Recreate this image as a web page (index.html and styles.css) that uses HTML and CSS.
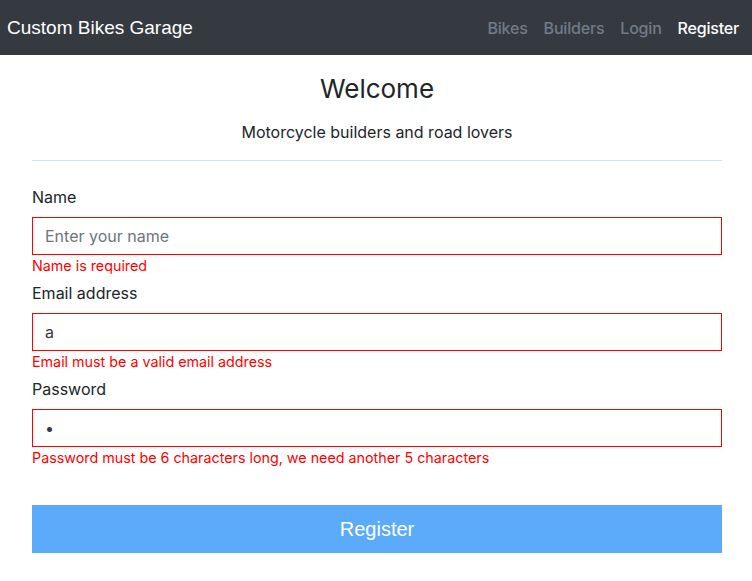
FILE: index.html
```html
<!DOCTYPE html>
<html lang="en">
<head>
<meta charset="utf-8">
<title>Custom Bikes Garage</title>
<link rel="stylesheet" href="styles.css">
</head>
<body>
<nav class="navbar">
  <a class="brand" href="#">Custom Bikes Garage</a>
  <ul class="nav">
    <li><a class="nav-link" href="#">Bikes</a></li>
    <li><a class="nav-link" href="#">Builders</a></li>
    <li><a class="nav-link" href="#">Login</a></li>
    <li><a class="nav-link active" href="#">Register</a></li>
  </ul>
</nav>
<main class="container">
  <h2 class="title">Welcome</h2>
  <p class="subtitle">Motorcycle builders and road lovers</p>
  <hr class="divider">
  <form class="form">
    <div class="group">
      <label class="label" for="name">Name</label>
      <input class="input" id="name" type="text" placeholder="Enter your name">
      <div class="error">Name is required</div>
    </div>
    <div class="group">
      <label class="label" for="email">Email address</label>
      <input class="input" id="email" type="text" value="a">
      <div class="error">Email must be a valid email address</div>
    </div>
    <div class="group">
      <label class="label" for="pw">Password</label>
      <input class="input" id="pw" type="password" value="a">
      <div class="error">Password must be 6 characters long, we need another 5 characters</div>
    </div>
    <button class="btn" type="button">Register</button>
  </form>
</main>
</body>
</html>
```
FILE: styles.css
```css
* { box-sizing: border-box; }
html, body { margin: 0; padding: 0; }
body {
  font-family: "Inter", "Liberation Sans", sans-serif;
  color: #212529;
  background: #fff;
  font-size: 16px;
}
.navbar {
  height: 55px;
  background: #343a40;
  display: flex;
  align-items: center;
  justify-content: space-between;
  padding: 0 5px 0 7px;
}
.brand {
  color: #fff;
  text-decoration: none;
  font-family: "Liberation Sans", sans-serif;
  font-size: 19px;
}
.nav {
  list-style: none;
  margin: 0;
  padding: 0;
  display: flex;
}
.nav-link {
  display: block;
  padding: 0 8px;
  color: #727b87;
  text-decoration: none;
  font-size: 16px;
  font-weight: 500;
  letter-spacing: -0.2px;
}
.nav-link.active { color: #fff; }
.container {
  margin: 0 30px 0 32px;
}
.title {
  margin: 17px 0 0;
  font-size: 26px;
  font-weight: 400;
  line-height: 34px;
  text-align: center;
}
.subtitle {
  margin: 14px 0 0;
  text-align: center;
  line-height: 24px;
  font-size: 16px;
}
.divider {
  margin: 16px 0 0;
  border: 0;
  border-top: 1px solid #d5e5f0;
}
.form { margin-top: 24px; }
.group { margin-bottom: 4px; }
.label {
  display: block;
  line-height: 24px;
  margin-bottom: 8px;
  font-size: 16px;
}
.input {
  display: block;
  width: 100%;
  height: 38px;
  padding: 0 12px;
  border: 1px solid #f00;
  border-radius: 0;
  font-family: inherit;
  font-size: 16px;
  color: #343a40;
  outline: none;
  background: #fff;
}
.input::placeholder { color: #6c757d; }
.error {
  color: #f00;
  font-size: 14.3px;
  line-height: 22px;
}
.btn {
  display: block;
  width: 100%;
  height: 48px;
  margin-top: 36px;
  border: 0;
  border-radius: 0;
  background: #5babfa;
  color: #fff;
  font-family: "Liberation Sans", sans-serif;
  font-size: 20px;
}
```
